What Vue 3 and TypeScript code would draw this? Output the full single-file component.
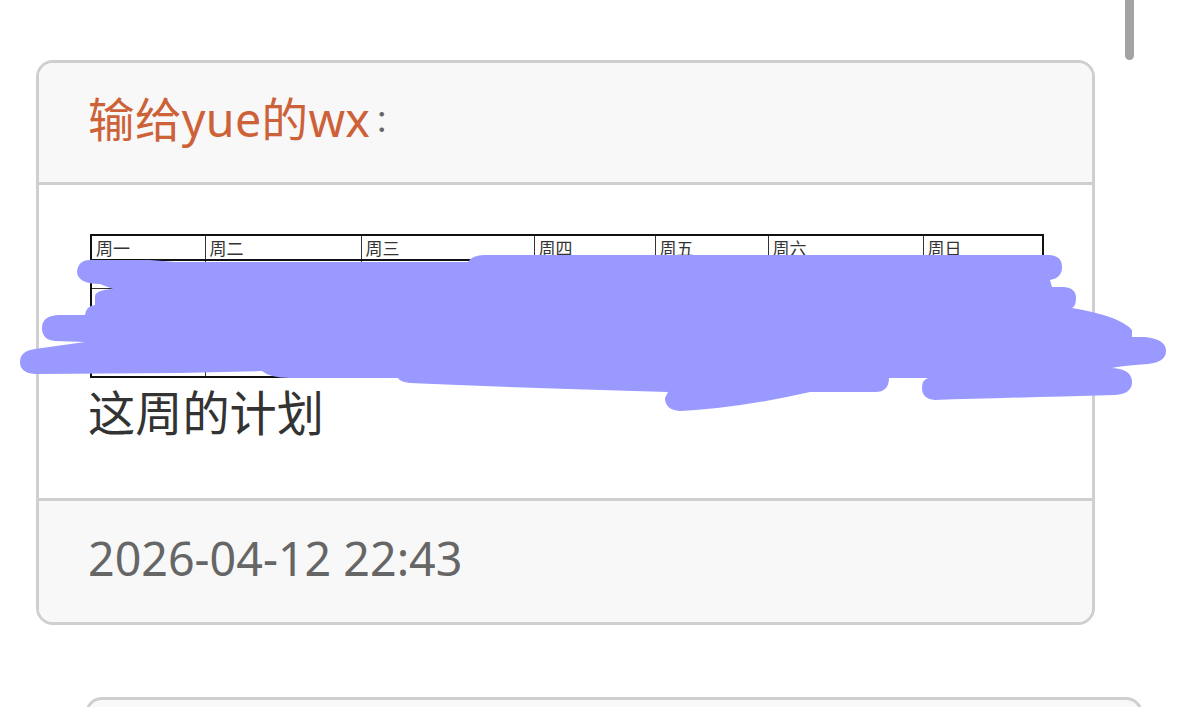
<template>
  <div class="page">
    <!-- 第一张卡片 -->
    <div class="card">
      <div class="card-header">
        <span class="title">输给yue的wx</span><span class="colon">：</span>
      </div>
      <div class="card-body">
        <table class="week-table">
          <colgroup>
            <col
              v-for="w in colWidths"
              :key="w"
              :style="{ width: w + 'px' }"
            >
          </colgroup>
          <tbody>
            <tr class="head-row">
              <td
                v-for="d in weekDays"
                :key="d"
              >
                {{ d }}
              </td>
            </tr>
            <tr class="row-two">
              <td
                v-for="d in weekDays"
                :key="d"
              />
            </tr>
            <tr class="row-three">
              <td>周</td>
              <td
                v-for="d in weekDays.slice(1)"
                :key="d"
              />
            </tr>
          </tbody>
        </table>
        <p class="plan-text">
          这周的计划
        </p>
      </div>
      <div class="card-footer">
        2026-04-12 22:43
      </div>
    </div>

    <!-- 下一张卡片，只露出顶边 -->
    <div class="card next-card" />

    <!-- 滚动条 -->
    <div class="scroll-thumb" />

    <!-- 涂抹遮挡 -->
    <svg
      class="scribble"
      viewBox="0 0 1179 707"
      width="1179"
      height="707"
    >
      <path
        fill="#9999ff"
        d="M90 260 L150 260 L175 262 L415 262 L468 262 Q472 255 485 255 L1050 255 Q1062 256 1062 267 Q1062 278 1050 280 L1052 287 L1064 287 Q1076 288 1076 298 Q1076 306 1072 308 Q1120 316 1132 330 L1132 337 L1145 337 Q1166 339 1166 351 Q1166 362 1148 364 Q1120 366 1112 368 Q1132 369 1132 382 Q1132 394 1115 395 Q1000 398 935 400 Q922 399 922 388 Q922 380 928 378 L889 378 Q889 392 875 392 L810 392 Q740 408 680 411 Q665 410 665 398 L668 392 Q520 388 410 383 Q400 382 398 378 L290 378 Q270 378 262 371 L180 373 L35 374 Q20 373 20 362 Q20 351 35 349 L85 342 L55 341 Q42 340 42 328 Q42 316 58 315 L85 315 Q86 306 95 305 L95 296 Q96 290 113 289 L100 284 Q78 284 77 272 Q78 260 90 260 Z"
      />
    </svg>
  </div>
</template>

<script setup lang="ts">
const weekDays = ['周一', '周二', '周三', '周四', '周五', '周六', '周日']
const colWidths = [114, 156, 173, 121, 113, 155, 120]
</script>

<style>
html,
body {
  margin: 0;
  background: #fff;
  overflow: hidden;
}
</style>

<style scoped>
.page {
  position: relative;
  width: 1179px;
  height: 707px;
  overflow: hidden;
  padding: 60px 0 0 36px;
  box-sizing: border-box;
  font-family: "Noto Sans", "Noto Sans CJK SC", sans-serif;
}

.card {
  width: 1059px;
  box-sizing: border-box;
  border: 3px solid #cfcfcf;
  border-radius: 17px;
  background: #fff;
  overflow: hidden;
}

.card-header {
  height: 113px;
  padding: 0 49px 6px;
  display: flex;
  align-items: center;
  background: #f8f8f8;
  border-bottom: 3px solid #cfcfcf;
  font-size: 46.6px;
  line-height: 1;
}

.title {
  color: #cd6138;
  letter-spacing: 0.3px;
}

.colon {
  margin-left: 4px;
  color: #666;
  font-size: 30px;
}

.card-body {
  height: 313px;
  padding: 49px 0 0 51px;
  box-sizing: border-box;
}

.week-table {
  width: 952px;
  table-layout: fixed;
  border-collapse: collapse;
  border: 2px solid #111;
  font-size: 17px;
  line-height: 20px;
  color: #333;
}

.week-table td {
  border: 1px solid #333;
  padding: 3px 4px 0;
  overflow: hidden;
  white-space: nowrap;
  vertical-align: top;
}

.head-row td {
  height: 20px;
  border-bottom: 2px solid #111;
}

.row-two td {
  height: 24px;
}

.row-three td {
  height: 84px;
}

.plan-text {
  margin: 7px 0 0 -2px;
  font-size: 47.2px;
  line-height: 56px;
  color: #333;
}

.card-footer {
  height: 114px;
  padding: 0 49px 7px;
  display: flex;
  align-items: center;
  background: #f8f8f8;
  border-top: 3px solid #cfcfcf;
  font-size: 46.6px;
  color: #666;
}

.next-card {
  width: 1058px;
  height: 60px;
  margin: 72px 0 0 49px;
  background: #f8f8f8;
}

.scroll-thumb {
  position: absolute;
  top: -10px;
  left: 1125px;
  width: 9px;
  height: 70px;
  border-radius: 5px;
  background: #a3a3a3;
}

.scribble {
  position: absolute;
  top: 0;
  left: 0;
}
</style>
